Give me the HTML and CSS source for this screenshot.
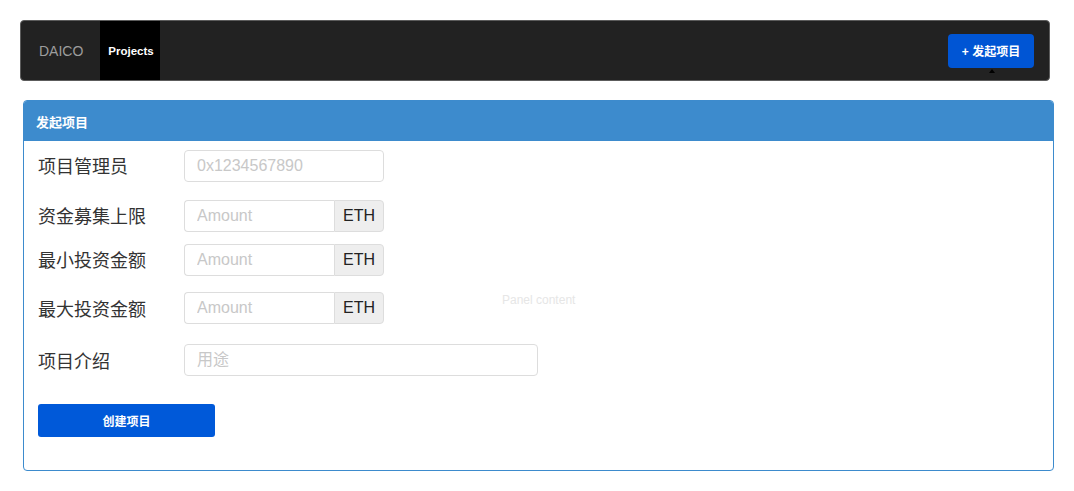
FILE: index.html
```html
<!DOCTYPE html>
<html lang="zh">
<head>
<meta charset="utf-8">
<title>DAICO</title>
<link rel="stylesheet" href="styles.css">
</head>
<body>
<nav class="navbar">
  <div class="nav-left">
    <span class="brand">DAICO</span>
    <span class="nav-item active">Projects</span>
  </div>
  <button class="btn-new">+ 发起项目</button>
</nav>
<section class="panel">
  <header class="panel-heading">发起项目</header>
  <div class="panel-body">
    <div class="row r1">
      <label class="label">项目管理员</label>
      <input class="input" placeholder="0x1234567890">
    </div>
    <div class="row r2">
      <label class="label">资金募集上限</label>
      <div class="group"><input class="input in-group" placeholder="Amount"><span class="addon">ETH</span></div>
    </div>
    <div class="row r3">
      <label class="label">最小投资金额</label>
      <div class="group"><input class="input in-group" placeholder="Amount"><span class="addon">ETH</span></div>
    </div>
    <div class="row r4">
      <label class="label">最大投资金额</label>
      <div class="group"><input class="input in-group" placeholder="Amount"><span class="addon">ETH</span></div>
    </div>
    <div class="row r5">
      <label class="label">项目介绍</label>
      <input class="input wide" placeholder="用途">
    </div>
    <button class="btn-create">创建项目</button>
    <span class="panel-content">Panel content</span>
  </div>
</section>
</body>
</html>
```
FILE: styles.css
```css
* { box-sizing: border-box; }
body {
  margin: 0;
  padding: 20px 20px 0 20px;
  font-family: "Liberation Sans", "Noto Sans CJK SC", sans-serif;
  background: #fff;
  color: #333;
}
.navbar {
  width: 1030px;
  height: 61px;
  background: #222;
  border: 1px solid #5c5c5c;
  border-radius: 4px;
  display: flex;
  align-items: stretch;
  justify-content: space-between;
}
.nav-left { display: flex; align-items: stretch; }
.brand {
  display: flex;
  align-items: center;
  padding: 0 17px 0 18px;
  color: #9d9d9d;
  font-size: 14px;
}
.nav-item {
  display: flex;
  align-items: center;
  padding: 0 0 0 8px;
  width: 60px;
  background: #000;
  color: #fff;
  font-size: 11.5px;
  font-weight: bold;
}
.btn-new {
  position: relative;
  align-self: center;
  margin-right: 15px;
  width: 86px;
  height: 34px;
  background: #0055d4;
  color: #fff;
  border: none;
  border-radius: 4px;
  font-family: "Liberation Sans", "Noto Sans CJK SC", sans-serif;
  font-size: 12px;
  font-weight: bold;
  padding: 0;
}
.btn-new::after {
  content: "";
  position: absolute;
  left: 41px;
  bottom: -5px;
  border-left: 3px solid transparent;
  border-right: 3px solid transparent;
  border-bottom: 4px solid #000;
}
.panel {
  margin: 19px 0 0 3px;
  width: 1031px;
  border: 1px solid #3d8bcd;
  border-radius: 4px;
  overflow: hidden;
}
.panel-heading {
  height: 40px;
  background: #3d8bcd;
  color: #fff;
  font-size: 13px;
  font-weight: bold;
  padding: 0 12px;
  display: flex;
  align-items: center;
}
.panel-body {
  position: relative;
  padding: 9px 14px 33px 14px;
  display: flex;
  flex-direction: column;
  align-items: flex-start;
}
.row { display: flex; align-items: center; }
.r2 { margin-top: 18px; }
.r3 { margin-top: 12px; }
.r4 { margin-top: 16px; }
.r5 { margin-top: 20px; }
.label {
  width: 146px;
  font-size: 18px;
  color: #333;
  padding-bottom: 3px;
}
.r4 .label, .r5 .label { padding-bottom: 1px; }
.input {
  width: 200px;
  height: 32px;
  border: 1px solid #ddd;
  border-radius: 4px;
  padding: 0 12px;
  font-family: "Liberation Sans", "Noto Sans CJK SC", sans-serif;
  font-size: 16px;
  color: #333;
  outline: none;
}
.input::placeholder { color: #c8c8c8; }
.wide { width: 354px; }
.group { display: flex; }
.in-group {
  width: 150px;
  border-radius: 4px 0 0 4px;
  border-right: none;
}
.addon {
  width: 50px;
  height: 32px;
  display: flex;
  align-items: center;
  justify-content: center;
  background: #eee;
  border: 1px solid #ddd;
  border-radius: 0 4px 4px 0;
  font-size: 16px;
  color: #222;
}
.btn-create {
  margin-top: 28px;
  width: 177px;
  height: 33px;
  background: #0059d9;
  color: #fff;
  border: none;
  border-radius: 3px;
  font-family: "Liberation Sans", "Noto Sans CJK SC", sans-serif;
  font-size: 12px;
  font-weight: bold;
}
.panel-content {
  position: absolute;
  left: 478px;
  top: 152px;
  font-size: 12px;
  color: #e6e6e6;
}
```
